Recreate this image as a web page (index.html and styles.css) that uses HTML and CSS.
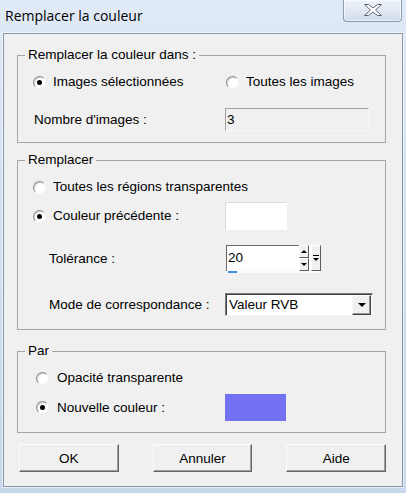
FILE: index.html
```html
<!DOCTYPE html>
<html lang="fr">
<head>
<meta charset="utf-8">
<title>Remplacer la couleur</title>
<link rel="stylesheet" href="styles.css">
</head>
<body>
<div class="window">
  <div class="titlebar">
    <span class="title">Remplacer la couleur</span>
    <div class="close">
      <svg width="20" height="14" viewBox="0 0 20 14"><polygon points="1.5,1.5 5.5,1.5 10,5 14.5,1.5 18.5,1.5 12.5,7 18.5,12.5 14.5,12.5 10,9 5.5,12.5 1.5,12.5 7.5,7" fill="#fff" stroke="#5b6674" stroke-width="1" stroke-linejoin="round"/></svg>
    </div>
  </div>
  <div class="client">
    <fieldset class="group g1">
      <legend>Remplacer la couleur dans :</legend>
      <div class="gb gb1">
        <div class="row r-radio">
          <label class="col1 opt"><span class="radio on"></span>Images sélectionnées</label>
          <label class="opt col2-in"><span class="radio"></span>Toutes les images</label>
        </div>
        <div class="row r-count">
          <span class="col1 lbl-near">Nombre d'images :</span>
          <span class="field-ro">3</span>
        </div>
      </div>
    </fieldset>

    <fieldset class="group g2">
      <legend>Remplacer</legend>
      <div class="gb gb2">
        <div class="row r-radio">
          <label class="opt"><span class="radio"></span>Toutes les régions transparentes</label>
        </div>
        <div class="row r-prev">
          <label class="col1 opt"><span class="radio on"></span>Couleur précédente :</label>
          <span class="swatch white"></span>
        </div>
        <div class="row r-tol">
          <span class="col1 lbl-ind">Tolérance :</span>
          <div class="spin">
            <div class="spin-row">
              <span class="spin-edit">20</span>
              <div class="spin-btns">
                <span class="sbtn"><span class="tri up"></span></span>
                <span class="sbtn"><span class="tri down"></span></span>
              </div>
              <span class="sbtn tall">
                <svg width="6" height="9" viewBox="0 0 6 9"><rect x="0" y="1" width="6" height="1" fill="#000"/><polygon points="0,4 6,4 3,7" fill="#000"/></svg>
              </span>
            </div>
            <div class="track"><span class="thumb"></span></div>
          </div>
        </div>
        <div class="row r-mode">
          <span class="col1 lbl-ind">Mode de correspondance :</span>
          <div class="select">
            <span class="sel-text">Valeur RVB</span>
            <span class="sel-btn"><span class="tri big"></span></span>
          </div>
        </div>
      </div>
    </fieldset>

    <fieldset class="group g3">
      <legend>Par</legend>
      <div class="gb gb3">
        <div class="row r-radio">
          <label class="opt shift"><span class="radio"></span>Opacité transparente</label>
        </div>
        <div class="row r-new">
          <label class="col1 opt shift"><span class="radio on"></span>Nouvelle couleur :</label>
          <span class="swatch blue"></span>
        </div>
      </div>
    </fieldset>

    <div class="buttons">
      <button class="btn">OK</button>
      <button class="btn">Annuler</button>
      <button class="btn">Aide</button>
    </div>
  </div>
</div>
</body>
</html>
```

FILE: styles.css
```css
* { box-sizing: border-box; }

html, body {
  margin: 0;
  padding: 0;
  width: 406px;
  height: 493px;
  overflow: hidden;
}

body {
  font-family: "Liberation Sans", Arial, sans-serif;
  font-size: 13.5px;
  color: #000;
  background: #c9d9ec;
}

.window {
  width: 406px;
  height: 493px;
  background: linear-gradient(180deg, #e0eaf6 0%, #d3e1f0 40%, #c8d8eb 100%);
  display: flex;
  flex-direction: column;
}

.titlebar {
  height: 33px;
  display: flex;
  justify-content: space-between;
  align-items: flex-start;
  flex: none;
}

.title {
  font-family: "Open Sans", "Noto Sans", sans-serif;
  font-size: 14px;
  line-height: 19px;
  margin: 6px 0 0 5px;
  color: #000;
}

.close {
  width: 59px;
  height: 22px;
  margin-right: 4px;
  border: 1px solid #8d9cb0;
  border-top: none;
  border-radius: 0 0 4px 4px;
  background: linear-gradient(180deg, #eef3f9 0%, #dfe7f1 55%, #d2dcea 100%);
  box-shadow: inset 0 0 0 1px rgba(255,255,255,0.6);
  display: flex;
  align-items: center;
  justify-content: center;
  padding-bottom: 1px;
}

.client {
  margin-left: 3px;
  width: 400px;
  height: 454px;
  background: #f0f0f0;
  border: 1px solid #8796aa;
  box-shadow: 0 0 0 1px rgba(255,255,255,0.55);
  display: flex;
  flex-direction: column;
  padding: 13px 16px 0 13px;
}

.group {
  margin: 0;
  padding: 0;
  border: 1px solid #a5a5a5;
  min-width: 0;
}

.g2 { margin-top: 9px; }
.g3 { margin-top: 13px; }

legend {
  margin-left: 7px;
  padding: 0 3px;
  line-height: 16px;
  font-size: 13.5px;
}

.gb {
  padding: 9px 0 11px 15px;
  display: flex;
  flex-direction: column;
}

.gb2 { padding-bottom: 13px; }

.row {
  display: flex;
  align-items: center;
}

.r-radio { height: 20px; }
.r-count { height: 23px; margin-top: 16px; }
.r-prev { height: 28px; margin-top: 5px; }
.r-tol { height: 28px; margin-top: 15px; }
.r-mode { height: 23px; margin-top: 20px; }
.r-new { height: 27px; margin-top: 6px; }

.col1 {
  width: 192px;
  flex: none;
}

.opt {
  display: flex;
  align-items: center;
  gap: 7px;
  line-height: 20px;
  white-space: nowrap;
}

.opt.shift { padding-left: 3px; gap: 8px; }

.col2-in { margin-left: 1px; }

.lbl-near { padding-left: 1px; }
.lbl-ind { padding-left: 16px; align-self: center; }

.r-tol .lbl-ind { padding-bottom: 1px; }

.radio {
  width: 13px;
  height: 13px;
  flex: none;
  border-radius: 50%;
  background: #fff;
  border: 1px solid;
  border-color: #8e8e8e #f6f6f6 #f6f6f6 #8e8e8e;
  box-shadow: inset 1px 1px 0 #cfcfcf;
  position: relative;
}

.radio.on::after {
  content: "";
  position: absolute;
  left: 3px;
  top: 3px;
  width: 5px;
  height: 5px;
  border-radius: 50%;
  background: #000;
}

.field-ro {
  width: 144px;
  height: 23px;
  border: 1px solid;
  border-color: #a3a3a3 #f7f7f7 #f7f7f7 #a3a3a3;
  background: #f0f0f0;
  padding-left: 1px;
  line-height: 21px;
}

.swatch {
  height: 28px;
  width: 62px;
  display: block;
}

.swatch.white {
  background: #fff;
  border: 1px solid;
  border-color: #dadada #fdfdfd #fdfdfd #dadada;
}

.swatch.blue {
  width: 61px;
  height: 27px;
  background: #7272f2;
}

.spin {
  margin-left: 1px;
  display: flex;
  flex-direction: column;
  height: 28px;
}

.spin-row {
  display: flex;
  height: 26px;
}

.spin-edit {
  width: 73px;
  height: 26px;
  background: #fff;
  border-top: 1px solid #6a6a6a;
  border-left: 1px solid #6a6a6a;
  padding-left: 1px;
  line-height: 24px;
}

.spin-btns {
  display: flex;
  flex-direction: column;
  background: #fff;
  padding-right: 2px;
}

.sbtn {
  width: 10px;
  height: 13px;
  background: #f0f0f0;
  border: 1px solid;
  border-color: #fff #5c5c5c #5c5c5c #fff;
  display: flex;
  align-items: center;
  justify-content: center;
}

.sbtn.tall {
  height: 26px;
  width: 10px;
}

.tri {
  width: 0;
  height: 0;
  border-left: 3px solid transparent;
  border-right: 3px solid transparent;
}

.tri.up { border-bottom: 3px solid #000; }
.tri.down { border-top: 3px solid #000; }

.tri.big {
  border-left-width: 4px;
  border-right-width: 4px;
  border-top: 4px solid #000;
}

.track {
  height: 2px;
  width: 94px;
  background: #fafafa;
  display: flex;
}

.thumb {
  width: 9px;
  height: 2px;
  margin-left: 2px;
  background: #3b8fe0;
}

.select {
  width: 148px;
  height: 23px;
  display: flex;
  background: #fff;
  border: 1px solid;
  border-color: #7a7a7a #f4f4f4 #f4f4f4 #7a7a7a;
  box-shadow: inset 1px 1px 0 #404040;
  padding: 1px 1px 0 1px;
}

.sel-text {
  flex: 1;
  padding-left: 2px;
  line-height: 20px;
}

.sel-btn {
  width: 19px;
  height: 20px;
  background: #f0f0f0;
  border: 1px solid;
  border-color: #f8f8f8 #3e3e3e #3e3e3e #f8f8f8;
  box-shadow: inset -1px -1px 0 #9a9a9a;
  display: flex;
  align-items: center;
  justify-content: center;
}

.buttons {
  margin-top: 11px;
  padding-left: 2px;
  display: flex;
  gap: 34px;
}

.btn {
  width: 100px;
  height: 28px;
  margin: 0;
  padding: 0;
  font-family: "Liberation Sans", Arial, sans-serif;
  font-size: 13.5px;
  color: #000;
  background: #f0f0f0;
  border: 1px solid;
  border-color: #fcfcfc #656565 #656565 #fcfcfc;
  box-shadow: inset -1px -1px 0 #a0a0a0;
}
```
